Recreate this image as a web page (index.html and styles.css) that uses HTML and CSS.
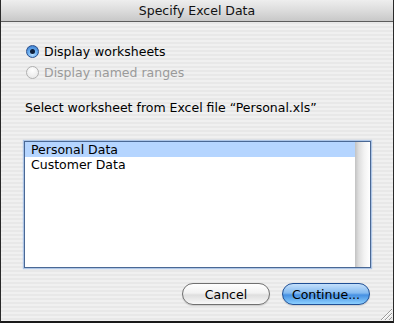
FILE: index.html
```html
<!DOCTYPE html>
<html>
<head>
<meta charset="utf-8">
<link rel="stylesheet" href="styles.css">
</head>
<body>
<div class="window">
  <div class="titlebar">Specify Excel Data</div>
  <div class="content">
    <div class="radios">
      <div class="radio-row">
        <span class="radio checked"><span class="dot"></span></span>
        <span class="radio-label">Display worksheets</span>
      </div>
      <div class="radio-row disabled">
        <span class="radio"></span>
        <span class="radio-label">Display named ranges</span>
      </div>
    </div>
    <div class="prompt">Select worksheet from Excel file “Personal.xls”</div>
    <div class="listbox">
      <div class="rows">
        <div class="row selected">Personal Data</div>
        <div class="row">Customer Data</div>
      </div>
      <div class="scrolltrack"></div>
    </div>
    <div class="buttons">
      <button class="btn">Cancel</button>
      <button class="btn default">Continue...</button>
    </div>
  </div>
  <svg class="grip" width="12" height="12" viewBox="0 0 12 12">
    <line x1="1" y1="12" x2="12" y2="1" stroke="#9a9a9a" stroke-width="1"/>
    <line x1="5" y1="12" x2="12" y2="5" stroke="#9a9a9a" stroke-width="1"/>
    <line x1="9" y1="12" x2="12" y2="9" stroke="#9a9a9a" stroke-width="1"/>
    <line x1="2" y1="12" x2="12" y2="2" stroke="#ffffff" stroke-width="1"/>
    <line x1="6" y1="12" x2="12" y2="6" stroke="#ffffff" stroke-width="1"/>
  </svg>
</div>
</body>
</html>
```
FILE: styles.css
```css
html, body {
  margin: 0;
  padding: 0;
  background: #000;
}
.window {
  position: relative;
  width: 394px;
  height: 323px;
  box-sizing: border-box;
  border-left: 1px solid #2a2a2a;
  border-right: 1px solid #2a2a2a;
  border-bottom: 2px solid #1a1a1a;
  background: repeating-linear-gradient(to bottom, #f0f0f0 0px, #f0f0f0 2px, #e8e8e8 2px, #e8e8e8 4px);
  font-family: "DejaVu Sans", sans-serif;
  font-size: 12.5px;
  color: #000;
  overflow: hidden;
}
.titlebar {
  height: 21px;
  border-bottom: 1px solid #5c5c5c;
  background: linear-gradient(to bottom, #eeeeee 0%, #dcdcdc 50%, #c8c8c8 100%);
  text-align: center;
  line-height: 22px;
  font-size: 12.5px;
  color: #111;
}
.content {
  padding: 19px 23px 0 22px;
}
.radios {
  padding-left: 3px;
}
.radio-row {
  display: flex;
  align-items: center;
  height: 21px;
}
.radio {
  width: 13px;
  height: 13px;
  border-radius: 50%;
  box-sizing: border-box;
  border: 1px solid #b0b0b0;
  background: radial-gradient(circle at 50% 30%, #ffffff, #ececec 70%);
  margin-right: 5px;
  display: flex;
  align-items: center;
  justify-content: center;
}
.radio.checked {
  border: 1px solid #2a4f8c;
  background: radial-gradient(circle at 50% 75%, #bfe2ff 0%, #6aaef0 45%, #2f6fc4 100%);
}
.dot {
  width: 5px;
  height: 5px;
  border-radius: 50%;
  background: #0d1e3a;
}
.disabled .radio-label {
  color: #9a9a9a;
}
.prompt {
  margin-top: 17px;
  padding-left: 2px;
  height: 15px;
  line-height: 15px;
}
.listbox {
  margin-top: 26px;
  margin-left: 1px;
  width: 347px;
  height: 127px;
  box-sizing: border-box;
  border: 1px solid #4a6894;
  box-shadow: 0 0 1px 1px rgba(130, 170, 225, 0.6);
  background: #fff;
  display: flex;
}
.rows {
  flex: 1;
}
.row {
  height: 15px;
  line-height: 15px;
  padding-left: 6px;
}
.row.selected {
  background: #b5d5ff;
}
.scrolltrack {
  width: 15px;
  background: linear-gradient(to right, #c2c2c2 0%, #dedede 25%, #f2f2f2 60%, #ffffff 100%);
}
.buttons {
  display: flex;
  justify-content: flex-end;
  gap: 12px;
  margin-top: 15px;
}
.btn {
  width: 88px;
  height: 22px;
  border-radius: 11px;
  font-family: "DejaVu Sans", sans-serif;
  font-size: 12.5px;
  color: #000;
  padding: 0;
  border: 1px solid #707070;
  background: linear-gradient(to bottom, #ffffff 0%, #f2f2f2 45%, #dedede 55%, #f8f8f8 100%);
  box-shadow: 0 1px 1px rgba(0,0,0,0.15);
}
.btn.default {
  border: 1px solid #1f4f95;
  background: linear-gradient(to bottom, #c4e0fb 0%, #84baf0 45%, #4690e2 55%, #8cd0ff 100%);
}
.grip {
  position: absolute;
  right: 1px;
  bottom: 1px;
}
```
